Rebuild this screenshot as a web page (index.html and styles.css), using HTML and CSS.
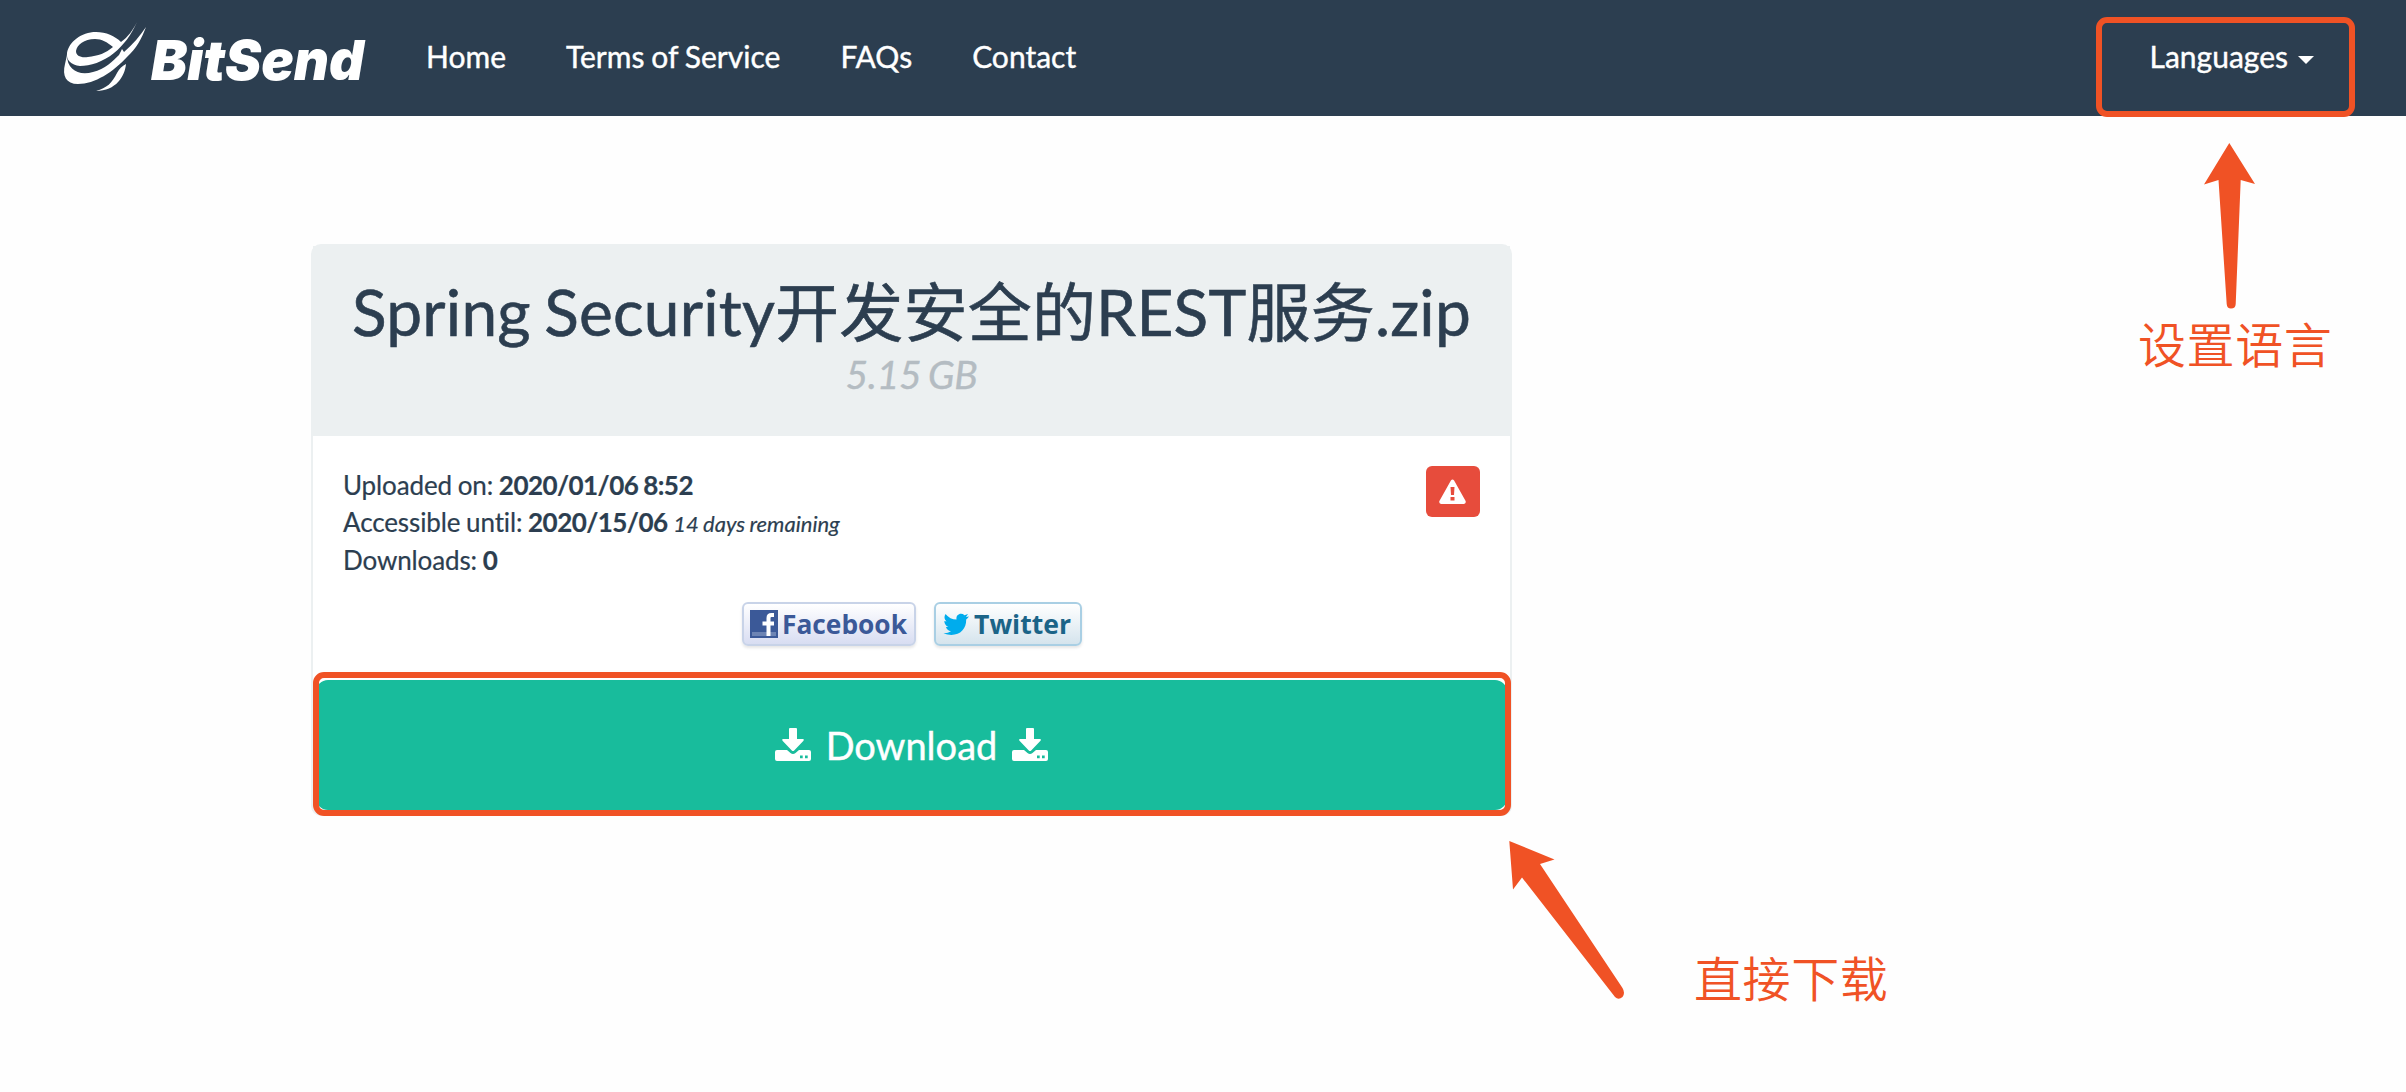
FILE: index.html
```html
<!DOCTYPE html>
<html lang="zh">
<head>
<meta charset="utf-8">
<title>BitSend</title>
<link rel="stylesheet" href="styles.css">
</head>
<body>
<header class="navbar">
  <a class="brand" aria-label="BitSend">
    <svg width="306" height="84" viewBox="60 14 306 84">
      <g fill="#fff">
        <path fill-rule="evenodd" d="M137 22C131 35 124 45 114 53C103 62 90 66 80 66C71 65 66 60 67 53C69 42 81 32 96 32C106 32 115 36 121 42C128 37 133 30 137 22ZM113 47C107 42 102 39 95 39C84 39 77 45 76 51C76 56 81 58 88 57C98 56 106 53 113 47Z"/>
        <path d="M146 27C142 38 136 49 127 57C113 72 95 84 78 84C66 84 62 76 65 64L67 55C67 70 79 76 93 72C105 69 113 61 119 55L122 49L124 52C133 44 140 36 146 27Z"/>
        <path d="M126 64C125 76 116 91 96 91C107 88 112 83 117 73C119 69 122 66 126 64Z"/>
      </g>
      <text class="brand-name" x="151" y="79.5" textLength="213" lengthAdjust="spacingAndGlyphs">BitSend</text>
    </svg>
  </a>
  <nav class="nav-links">
    <a>Home</a>
    <a>Terms of Service</a>
    <a>FAQs</a>
    <a>Contact</a>
  </nav>
  <a class="languages">Languages<span class="caret"></span></a>
</header>

<main class="card">
  <div class="card-head">
    <h2>Spring Security开发安全的REST服务.zip</h2>
    <em class="size">5.15 GB</em>
  </div>
  <div class="card-body">
    <div class="info">
      <div>
        <p>Uploaded on: <b>2020/01/06 8:52</b></p>
        <p>Accessible until: <b>2020/15/06</b> <i>14 days remaining</i></p>
        <p>Downloads: <b>0</b></p>
      </div>
      <button class="report" aria-label="Report">
        <svg width="28" height="26" viewBox="0 0 28 26"><path fill="#fff" fill-rule="evenodd" d="M11.900 1.600Q13.500-.6 15.100 1.600L26.600 22Q27.300 24.500 25 25H2Q-.3 24.500.4 22ZM11.500 8L12 16H15L15.500 8ZM11.500 18V21.500H15.500V18Z"/></svg>
      </button>
    </div>
    <div class="share">
      <a class="share-btn facebook">
        <svg width="170" height="40" viewBox="743 603 170 40">
          <rect x="749" y="609" width="28" height="28" fill="#3b5998"/>
          <rect x="751" y="631" width="24" height="4" fill="#6d84b4"/>
          <path d="M773 614H770.500Q767.500 614 767.500 617V635M761.500 622.500H773" fill="none" stroke="#fff" stroke-width="4"/>
          <text x="781" y="633" textLength="125" lengthAdjust="spacingAndGlyphs" fill="#3b5998">Facebook</text>
        </svg>
      </a>
      <a class="share-btn twitter">
        <svg width="144" height="40" viewBox="936 603 144 40">
          <path fill="#00aced" d="M969 615.500Q967.500 617.500 966.200 618.500C966.500 630 957 637 943.500 632.500Q948.500 632.300 951 630.200Q947 629.500 945.900 626H948.300Q944.500 624 944.300 620L946.500 620.500Q943 617 945.500 613Q950 618.500 956.500 618.600C955.700 613.500 961 611.200 964.500 614.200L968 613L966 616Z"/>
          <text x="974" y="633" textLength="97" lengthAdjust="spacingAndGlyphs" fill="#1b6488">Twitter</text>
        </svg>
      </a>
    </div>
  </div>
  <button class="download">
    <svg width="36" height="34" viewBox="0 0 36 34"><use href="#save"/></svg>
    <span>Download</span>
    <svg width="36" height="34" viewBox="0 0 36 34"><use href="#save"/></svg>
  </button>
</main>

<svg class="defs" width="0" height="0">
  <symbol id="save" viewBox="0 0 36 34">
    <path fill="#fff" fill-rule="evenodd" d="M15 0H21Q22 0 22 1V11H28Q29.500 11.300 28.500 12.700L19.200 22.500Q18 23.600 16.800 22.500L7.500 12.700Q6.500 11.300 8 11H14V1Q14 0 15 0ZM2 22H12L15.500 25Q18 27 20.500 25L24 22H34Q36 22 36 24V31Q36 33 34 33H2Q0 33 0 31V24Q0 22 2 22ZM25 27.500V30.200H27.700V27.500ZM30 27.500V30.200H32.700V27.500Z"/>
  </symbol>
</svg>

<!-- callouts laid over the page -->
<div class="frame frame-languages"></div>
<div class="frame frame-download"></div>
<svg class="arrows" width="2406" height="1092" viewBox="0 0 2406 1092" fill="#f05225">
  <path d="M2229.300 143L2255 184L2240.700 180L2235.700 304Q2235.500 308.500 2231 308.500Q2227 308.500 2226.700 304L2218.500 180L2204 184.500Z"/>
  <path d="M1509.300 841L1554.500 859.500L1540 864L1622.500 988Q1625.500 993 1622.500 997Q1618.500 1000.500 1615 997L1522 877.500L1513 889.500Z"/>
</svg>
<div class="note note-languages">设置语言</div>
<div class="note note-download">直接下载</div>
</body>
</html>
```
FILE: styles.css
```css
* { box-sizing: border-box; }
body {
  margin: 0;
  height: 1092px;
  position: relative;
  overflow: hidden;
  background: #fefefe;
  color: #2c3e50;
  font-family: Lato, "Noto Sans CJK SC", sans-serif;
  font-size: 26px;
  line-height: 37px;
}
.navbar {
  display: flex;
  align-items: flex-start;
  height: 116px;
  padding: 14px 92px 0 60px;
  background: #2c3e50;
  color: #fff;
  font-size: 30px;
  line-height: 43px;
  -webkit-text-stroke: 0.4px #fff;
}
.brand { display: flex; }
.brand svg, .share svg { overflow: visible; }
.brand-name {
  font: italic 900 55.5px Inter, sans-serif;
  fill: #fff;
}
.nav-links {
  display: flex;
  gap: 60px;
  margin: 21px 0 0 60px;
  word-spacing: -0.8px;
}
.languages {
  display: flex;
  align-items: center;
  gap: 10px;
  margin: 21px 0 0 auto;
}
.caret {
  margin-top: 6px;
  border: 8px solid transparent;
  border-top-color: #fff;
  border-bottom: 0;
}
.card {
  width: 1201px;
  height: 572px;
  margin: 128px 0 0 311px;
  border: 2px solid #ecf0f1;
  border-radius: 10px;
  background: #fff;
}
.card-head {
  display: flex;
  flex-direction: column;
  align-items: center;
  height: 190px;
  padding-top: 31px;
  background: #ecf0f1;
}
h2 {
  margin: 0;
  font-size: 64px;
  font-weight: 400;
  line-height: 70px;
  letter-spacing: 0.2px;
  word-spacing: -3px;
  white-space: nowrap;
  -webkit-text-stroke: 0.6px #2c3e50;
}
.size {
  margin-top: 6px;
  font-size: 39px;
  line-height: 42px;
  letter-spacing: -0.3px;
  word-spacing: -2px;
  color: #b4bcc2;
  -webkit-text-stroke: 0.4px #b4bcc2;
}
.card-body {
  height: 244px;
  padding: 30px 30px 0;
}
.info {
  display: flex;
  justify-content: space-between;
  align-items: flex-start;
}
.info > div { padding-top: 1px; }
p {
  margin: 0;
  letter-spacing: -0.12px;
  word-spacing: -0.8px;
  -webkit-text-stroke: 0.2px #2c3e50;
}
p b { letter-spacing: -0.55px; }
p i { font-size: 22px; letter-spacing: 0; }
.report {
  display: flex;
  align-items: center;
  justify-content: center;
  width: 54px;
  height: 51px;
  padding: 0;
  border: 0;
  border-radius: 6px;
  background: #e74c3c;
}
.share {
  display: flex;
  justify-content: center;
  gap: 18px;
  margin-top: 23px;
}
.share-btn {
  display: flex;
  border: 2px solid #c8d3e8;
  border-radius: 6px;
  background: linear-gradient(#fff, #d8ddf2);
  box-shadow: 0 2px 3px #0000001a;
}
.share-btn.twitter {
  border-color: #a9cfe4;
  background: linear-gradient(#fff, #d5e4ed);
}
.share text { font: bold 27px "Open Sans", sans-serif; }
.download {
  display: flex;
  align-items: center;
  justify-content: center;
  gap: 15px;
  width: 1191px;
  height: 130px;
  margin-left: 3px;
  border: 0;
  border-radius: 12px;
  background: #18bc9c;
  color: #fff;
  font: 38px Lato, sans-serif;
  -webkit-text-stroke: 0.4px #fff;
}
.defs { position: absolute; }
.frame {
  position: absolute;
  border: 6px solid #f05225;
  border-radius: 11px;
}
.frame-languages { left: 2096px; top: 17px; width: 259px; height: 100px; }
.frame-download { left: 313px; top: 672px; width: 1198px; height: 144px; }
.arrows { position: absolute; left: 0; top: 0; }
.note {
  position: absolute;
  color: #f05225;
  font-family: "Noto Sans CJK SC", sans-serif;
  font-size: 48px;
  font-weight: 350;
  line-height: 60px;
  letter-spacing: 0.6px;
  white-space: nowrap;
}
.note-languages { left: 2138px; top: 312px; }
.note-download { left: 1694px; top: 946px; }
```
